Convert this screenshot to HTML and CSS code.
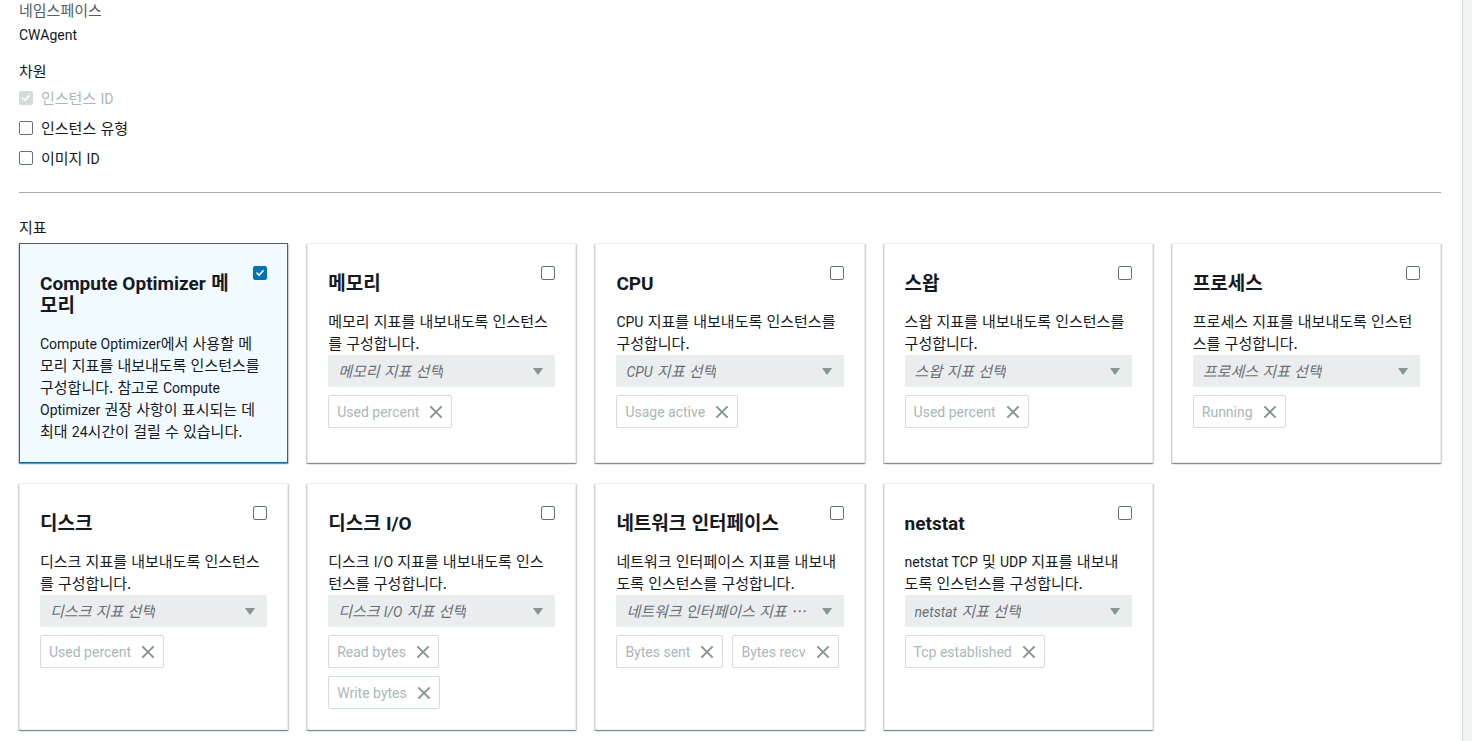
FILE: index.html
```html
<!DOCTYPE html>
<html lang="ko">
<head>
    <meta charset="UTF-8">
    <title>지표 구성</title>
    <link rel="stylesheet" href="styles.css">
</head>
<body>
    <div class="page">
        <div class="main">
            <!-- Namespace -->
            <div class="field-label">네임스페이스</div>
            <div class="field-value"><span class="en">CWAgent</span></div>

            <!-- Dimensions -->
            <div class="section-title">차원</div>
            <div class="check-row disabled">
                <span class="box checked"><svg viewBox="0 0 14 14"><path d="M3.5 7.2l2.4 2.4 4.6-5" /></svg></span>
                <span>인스턴스 <span class="en">ID</span></span>
            </div>
            <div class="check-row">
                <span class="box"></span>
                <span>인스턴스 유형</span>
            </div>
            <div class="check-row">
                <span class="box"></span>
                <span>이미지 <span class="en">ID</span></span>
            </div>

            <hr class="divider">

            <!-- Metrics -->
            <div class="metrics-title">지표</div>
            <div class="card-grid">
                <div class="card selected">
                    <div class="card-head">
                        <h3><span class="en">Compute Optimizer</span> 메모리</h3>
                        <span class="box checked"><svg viewBox="0 0 14 14"><path d="M3.5 7.2l2.4 2.4 4.6-5" /></svg></span>
                    </div>
                    <p class="card-desc"><span class="en">Compute Optimizer</span>에서 사용할 메모리 지표를 내보내도록 인스턴스를 구성합니다. 참고로 <span class="en">Compute Optimizer</span> 권장 사항이 표시되는 데 최대 <span class="en">24</span>시간이 걸릴 수 있습니다.</p>
                </div>

                <div class="card">
                    <div class="card-head">
                        <h3>메모리</h3>
                        <span class="box"></span>
                    </div>
                    <p class="card-desc">메모리 지표를 내보내도록 인스턴스를 구성합니다.</p>
                    <div class="select"><span class="placeholder">메모리 지표 선택</span><span class="caret"></span></div>
                    <div class="tokens">
                        <span class="token">Used percent<span class="x"></span></span>
                    </div>
                </div>

                <div class="card">
                    <div class="card-head">
                        <h3><span class="en">CPU</span></h3>
                        <span class="box"></span>
                    </div>
                    <p class="card-desc"><span class="en">CPU</span> 지표를 내보내도록 인스턴스를 구성합니다.</p>
                    <div class="select"><span class="placeholder"><span class="en">CPU</span> 지표 선택</span><span class="caret"></span></div>
                    <div class="tokens">
                        <span class="token">Usage active<span class="x"></span></span>
                    </div>
                </div>

                <div class="card">
                    <div class="card-head">
                        <h3>스왑</h3>
                        <span class="box"></span>
                    </div>
                    <p class="card-desc">스왑 지표를 내보내도록 인스턴스를 구성합니다.</p>
                    <div class="select"><span class="placeholder">스왑 지표 선택</span><span class="caret"></span></div>
                    <div class="tokens">
                        <span class="token">Used percent<span class="x"></span></span>
                    </div>
                </div>

                <div class="card">
                    <div class="card-head">
                        <h3>프로세스</h3>
                        <span class="box"></span>
                    </div>
                    <p class="card-desc">프로세스 지표를 내보내도록 인스턴스를 구성합니다.</p>
                    <div class="select"><span class="placeholder">프로세스 지표 선택</span><span class="caret"></span></div>
                    <div class="tokens">
                        <span class="token">Running<span class="x"></span></span>
                    </div>
                </div>

                <div class="card">
                    <div class="card-head">
                        <h3>디스크</h3>
                        <span class="box"></span>
                    </div>
                    <p class="card-desc">디스크 지표를 내보내도록 인스턴스를 구성합니다.</p>
                    <div class="select"><span class="placeholder">디스크 지표 선택</span><span class="caret"></span></div>
                    <div class="tokens">
                        <span class="token">Used percent<span class="x"></span></span>
                    </div>
                </div>

                <div class="card">
                    <div class="card-head">
                        <h3>디스크 <span class="en">I/O</span></h3>
                        <span class="box"></span>
                    </div>
                    <p class="card-desc">디스크 <span class="en">I/O</span> 지표를 내보내도록 인스턴스를 구성합니다.</p>
                    <div class="select"><span class="placeholder">디스크 <span class="en">I/O</span> 지표 선택</span><span class="caret"></span></div>
                    <div class="tokens">
                        <span class="token">Read bytes<span class="x"></span></span>
                        <span class="token">Write bytes<span class="x"></span></span>
                    </div>
                </div>

                <div class="card">
                    <div class="card-head">
                        <h3>네트워크 인터페이스</h3>
                        <span class="box"></span>
                    </div>
                    <p class="card-desc">네트워크 인터페이스 지표를 내보내도록 인스턴스를 구성합니다.</p>
                    <div class="select"><span class="placeholder">네트워크 인터페이스 지표 선택</span><span class="caret"></span></div>
                    <div class="tokens">
                        <span class="token">Bytes sent<span class="x"></span></span>
                        <span class="token">Bytes recv<span class="x"></span></span>
                    </div>
                </div>

                <div class="card">
                    <div class="card-head">
                        <h3><span class="en">netstat</span></h3>
                        <span class="box"></span>
                    </div>
                    <p class="card-desc"><span class="en">netstat TCP</span> 및 <span class="en">UDP</span> 지표를 내보내도록 인스턴스를 구성합니다.</p>
                    <div class="select"><span class="placeholder"><span class="en">netstat</span> 지표 선택</span><span class="caret"></span></div>
                    <div class="tokens">
                        <span class="token">Tcp established<span class="x"></span></span>
                    </div>
                </div>
            </div>
        </div>
        <div class="side-strip"></div>
    </div>
</body>
</html>
```

FILE: styles.css
```css
/* Basic reset */
* {
    box-sizing: border-box;
    margin: 0;
    padding: 0;
}

body {
    font-family: "Noto Sans CJK KR", "Noto Sans", sans-serif;
    font-size: 15px;
    line-height: 20px;
    color: #16191f;
    background-color: #ffffff;
}

/* latin runs use a narrower face than the korean one */
.en {
    font-family: Roboto, "Noto Sans", sans-serif;
    font-size: 0.935em;
    line-height: 0;
}

.page {
    display: flex;
    min-height: 741px;
}

.main {
    flex: 1;
    padding: 0 21px 0 19px;
}

.side-strip {
    width: 10px;
    background-color: #f2f3f3;
    border-left: 1px solid #d5dbdb;
}

/* Top fields */
.field-label {
    color: #545b64;
}

.field-value {
    margin-top: 4px;
}

.section-title {
    margin-top: 17px;
    margin-bottom: 2px;
}

.check-row {
    display: flex;
    align-items: center;
    gap: 8px;
    height: 30px;
}

.check-row.disabled {
    color: #aab7b8;
}

.box {
    width: 14px;
    height: 14px;
    flex-shrink: 0;
    border: 1px solid #687078;
    border-radius: 2px;
    background-color: #ffffff;
    display: inline-flex;
}

.box.checked {
    border-color: #0073bb;
    background-color: #0073bb;
}

.check-row.disabled .box.checked {
    border-color: #d5dbdb;
    background-color: #d5dbdb;
}

.box svg {
    width: 12px;
    height: 12px;
}

.box svg path {
    fill: none;
    stroke: #ffffff;
    stroke-width: 2;
    stroke-linecap: round;
    stroke-linejoin: round;
}

.divider {
    border: none;
    border-top: 1px solid #a9acad;
    margin-top: 19px;
}

.metrics-title {
    margin-top: 24px;
    margin-bottom: 6px;
}

/* Metric cards */
.card-grid {
    display: grid;
    grid-template-columns: repeat(5, minmax(0, 1fr));
    column-gap: 19px;
    row-gap: 20px;
}

.card {
    min-width: 0;
    background-color: #ffffff;
    border: 1px solid #eaeded;
    box-shadow: 0 1px 1px 0 rgba(0, 28, 36, 0.3), 1px 1px 1px 0 rgba(0, 28, 36, 0.15), -1px 1px 1px 0 rgba(0, 28, 36, 0.15);
    padding: 22px 20px 20px;
}

.card.selected {
    background-color: #f1faff;
    border-color: #0073bb;
}

.card-head {
    display: flex;
    justify-content: space-between;
    align-items: flex-start;
    gap: 12px;
}

.card-head h3 {
    font-size: 19px;
    line-height: 22px;
    font-weight: 700;
    padding-top: 5px;
}

.card-head h3 .en {
    font-size: 1em;
}

.card-desc {
    margin-top: 17px;
    padding-right: 3px;
    line-height: 22px;
}

.select {
    margin-top: 1px;
    height: 32px;
    background-color: #eaeded;
    border-radius: 2px;
    display: flex;
    align-items: center;
    justify-content: space-between;
    padding: 0 12px 0 10px;
    gap: 8px;
}

.placeholder {
    min-width: 0;
    font-style: italic;
    color: #687078;
    white-space: nowrap;
    overflow: hidden;
    text-overflow: ellipsis;
}

.caret {
    flex-shrink: 0;
    width: 0;
    height: 0;
    border-left: 5px solid transparent;
    border-right: 5px solid transparent;
    border-top: 7px solid #879596;
}

.tokens {
    display: flex;
    flex-wrap: wrap;
    gap: 8px 9px;
    margin-top: 8px;
}

.token {
    display: inline-flex;
    align-items: center;
    gap: 10px;
    height: 33px;
    padding: 0 8px;
    border: 1px solid #d5dbdb;
    border-radius: 2px;
    font-family: Roboto, "Noto Sans", sans-serif;
    font-size: 14px;
    color: #aab7b8;
}

.x {
    position: relative;
    width: 14px;
    height: 14px;
}

.x::before,
.x::after {
    content: "";
    position: absolute;
    left: -1px;
    top: 6px;
    width: 16px;
    height: 2px;
    background-color: #879596;
    transform: rotate(45deg);
}

.x::after {
    transform: rotate(-45deg);
}
```
